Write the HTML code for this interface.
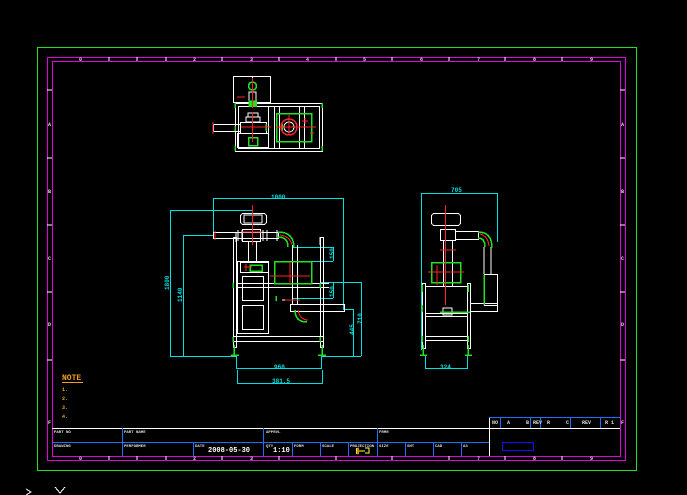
<!DOCTYPE html>
<html><head><style>
html,body{margin:0;padding:0;background:#000;}
svg{display:block}
text{font-family:"Liberation Mono",monospace;font-weight:bold}
</style></head><body>
<svg width="687" height="495" viewBox="0 0 687 495" xmlns="http://www.w3.org/2000/svg" shape-rendering="crispEdges">
<rect width="687" height="495" fill="#000"/>
<!-- borders -->
<rect x="37.5" y="47.5" width="599" height="423" fill="none" stroke="#22e022" stroke-width="1"/>
<rect x="47.5" y="57.5" width="578" height="403" fill="none" stroke="#e000e0" stroke-width="1"/>
<rect x="52.5" y="61.5" width="568" height="395" fill="none" stroke="#e000e0" stroke-width="1"/>
<g stroke="#fff" stroke-width="1">
<path d="M109 57v4M137 57v4M166 57v4M222 57v4M279 57v4M336 57v4M392 57v4M449 57v4M505 57v4M562 57v4"/>
<path d="M109 456v4M137 456v4M166 456v4M222 456v4M279 456v4M336 456v4M392 456v4M449 456v4M505 456v4M562 456v4"/>
<path d="M47 90h5M47 158h5M47 225h5M47 292h5M47 360h5M620 90h5M620 158h5M620 225h5M620 292h5M620 360h5"/>
</g>
<g fill="#ddd" font-size="5">
<text x="79" y="61">0</text><text x="193" y="61">2</text><text x="250" y="61">3</text><text x="306" y="61">4</text><text x="363" y="61">5</text><text x="420" y="61">6</text><text x="477" y="61">7</text><text x="533" y="61">8</text><text x="590" y="61">9</text>
<text x="79" y="460">0</text><text x="193" y="460">2</text><text x="250" y="460">3</text><text x="477" y="460">7</text><text x="533" y="460">8</text><text x="590" y="460">9</text>
<text x="48" y="126">A</text><text x="48" y="193">B</text><text x="48" y="260">C</text><text x="48" y="326">D</text><text x="48" y="424">F</text>
<text x="621" y="126">A</text><text x="621" y="193">B</text><text x="621" y="260">C</text><text x="621" y="326">D</text><text x="621" y="424">F</text>
</g>

<!-- title block -->
<g stroke-width="1" fill="none">
<path d="M52 428.5h437" stroke="#fff"/>
<path d="M489.5 417v39" stroke="#fff"/>
<path d="M489 417.5h131" stroke="#1e6fff"/>
<path d="M489 428.5h131" stroke="#fff"/>
<path d="M52 442.5h437" stroke="#1e6fff"/>
<path d="M122.5 428v28M263.5 428v28M193.5 442v14M292.5 442v14M320.5 442v14M348.5 442v14M377.5 428v28M405.5 442v14M433.5 442v14M461.5 442v14" stroke="#1e6fff"/>
<path d="M500.5 417v11M530.5 417v11M540.5 417v11M570.5 417v11M600.5 417v11" stroke="#1e6fff"/>
<rect x="502.5" y="442.5" width="31" height="8" stroke="#1010ff" stroke-width="1.3"/>
</g>
<g fill="#ddd" font-size="4">
<text x="54" y="433">PART NO</text><text x="124" y="433">PART NAME</text><text x="266" y="433">APPRVL</text><text x="379" y="433">FRMR</text>
<text x="54" y="447">DRAWING</text><text x="124" y="447">PERFORMER</text><text x="195" y="447">DATE</text><text x="266" y="447">QTY</text><text x="294" y="447">FORM</text><text x="322" y="447">SCALE</text><text x="350" y="447">PROJECTION</text><text x="379" y="447">SIZE</text><text x="407" y="447">SHT</text><text x="435" y="447">CAD</text><text x="463" y="447">A3</text>
</g>
<g fill="#ddd" font-size="5"><text x="492" y="424">NO</text><text x="507" y="424">A</text><text x="526" y="424">B</text><text x="533" y="424">REV</text><text x="547" y="424">R</text><text x="566" y="424">C</text><text x="582" y="424">REV</text><text x="605" y="424">R 1</text></g>
<text x="208" y="452" fill="#fff" font-size="7" font-weight="normal">2008-05-30</text>
<text x="273" y="452" fill="#fff" font-size="7" font-weight="normal">1:10</text>
<g><rect x="356" y="448" width="3" height="6" fill="#b0ff40"/><path d="M359 451h6M365 448h4v5h-4" stroke="#ff4" fill="none"/><path d="M358 447v8" stroke="#f00"/></g>

<!-- note -->
<text x="62" y="380" fill="#f0a020" font-size="8">NOTE</text>
<path d="M62 382.5h21" stroke="#f0a020"/>
<g fill="#f0a020" font-size="5"><text x="62" y="391">1.</text><text x="62" y="400">2.</text><text x="62" y="409">3.</text><text x="62" y="418">4.</text></g>

<!-- TOP VIEW -->
<g fill="none" stroke="#fff" stroke-width="1">
<rect x="233.5" y="76.5" width="37" height="26"/>
<rect x="235.5" y="103.5" width="87" height="48"/>
<rect x="238.5" y="106.5" width="81" height="42"/>
<path d="M268.5 106v42M274.5 106v42M279.5 106v42M299.5 106v42M304.5 106v42"/>
<rect x="213.5" y="124.5" width="27" height="7"/>
<rect x="240.5" y="122.5" width="26" height="11"/>
<path d="M246 117h14v5h-14zM248 113h10v4h-10z"/>
<rect x="237.5" y="133.5" width="31" height="14"/>
<path d="M252.5 76v16M249 92h7v14h-7z"/>
</g>
<g fill="none" stroke="#22e022" stroke-width="1.5">
<rect x="276.5" y="113.5" width="35" height="28"/>
<circle cx="252.5" cy="86" r="4"/>
<rect x="249" y="101" width="7" height="5" fill="#22e022"/>
<rect x="248.5" y="137.5" width="9" height="8"/>
<path d="M235 103v5M235 126v5M235 146v5M322 103v5M322 146v5M266 124v7M282 124v7"/>
</g>
<g stroke="#f22" fill="none" stroke-width="1">
<circle cx="289" cy="127" r="8" stroke-width="1.5"/><circle cx="289" cy="127" r="5" stroke="#fff"/>
<path d="M276 127h40M289 115v19M252.5 78v30M252.5 112v30M241 127h30M213 122v12M237 97h8M305 118v6M302 121h6M310 133h4"/>
</g>

<!-- FRONT VIEW dims -->
<g fill="none" stroke="#00e0e0" stroke-width="1">
<path d="M213 198.5h130M213.5 198v35M343.5 198v111"/>
<path d="M170.5 210v146M170 210.5h83M170 356.5h66M183.5 235v121M183 235.5h30"/>
<path d="M361.5 282v74M320 282.5h41M322 356.5h39M353.5 309v47M343 309.5h10"/>
<path d="M333.5 247v14M293 247.5h40M293 261.5h40M333.5 282v16M293 298.5h40"/>
<path d="M236.5 356v12M321.5 356v12M236 368.5h86M237.5 370v14M322.5 370v14M237 383.5h86"/>
<path d="M421.5 193v157M497.5 193v49M421 193.5h77M425.5 355v14M467.5 355v14M425 368.5h43"/>
</g>
<g fill="#00e0e0" font-size="6">
<text x="271" y="199">1000</text><text x="272" y="383">381.5</text><text x="274" y="369">960</text><text x="451" y="192">705</text><text x="440" y="369">324</text>
<text transform="translate(169 290) rotate(-90)">1800</text><text transform="translate(182 302) rotate(-90)">1140</text>
<text transform="translate(334 259) rotate(-90)">150</text><text transform="translate(334 297) rotate(-90)">150</text>
<text transform="translate(362 324) rotate(-90)">710</text><text transform="translate(354 335) rotate(-90)">445</text>
</g>

<!-- FRONT VIEW machine -->
<g fill="none" stroke="#fff" stroke-width="1">
<rect x="233.5" y="237.5" width="3" height="110"/><rect x="320.5" y="237.5" width="3" height="110"/>
<path d="M236 232v10M320 237v8"/>
<rect x="233.5" y="336.5" width="90" height="5"/>
<path d="M236 283.5h93M236 287.5h93"/>
<rect x="237.5" y="261.5" width="31" height="72"/>
<rect x="240.5" y="262.5" width="28" height="10"/>
<rect x="242.5" y="276.5" width="21" height="24"/><rect x="242.5" y="305.5" width="21" height="24"/>
<rect x="213.5" y="232.5" width="65" height="6"/>
<path d="M238 230v11M242 230v11M263 230v11M267 230v11M277 230v11"/>
<rect x="240.5" y="213.5" width="26" height="11" rx="3"/>
<path d="M244 215h18v8h-18z"/>
<rect x="242.5" y="229.5" width="18" height="12"/>
<path d="M248.5 241v21M256.5 241v21"/>
<path d="M292.5 245v60M297.5 245v60"/>
<rect x="290.5" y="304.5" width="54" height="7"/>
<path d="M282 300h18"/>
</g>
<g fill="none" stroke="#22e022" stroke-width="1.5">
<path d="M278 232q16 0 16 16M278 237q10 0 10 10"/>
<rect x="274.5" y="261.5" width="37" height="22"/>
<path d="M233 337v5M320 337v5M233 283v5M320 283v5M276 296v5"/>
<path d="M234 345v10M322 345v10M231 355h8M318 355h8"/>
<path d="M295 310q0 12 12 12"/>
<rect x="250" y="265" width="12" height="6"/>
</g>
<g stroke="#f22" fill="none" stroke-width="1">
<path d="M252.5 205v40M242 232h20M270 276h40M290 262v22M285 300h15M298 310q2 10 10 10M280 235q10 1 12 10M226 340h0M215 231v9"/>
<path d="M244 267h8M246 264v7"/>
</g>

<!-- SIDE VIEW -->
<g fill="none" stroke="#fff" stroke-width="1">
<rect x="431.5" y="213.5" width="29" height="12" rx="3"/>
<rect x="440.5" y="229.5" width="15" height="11"/>
<path d="M443.5 241v45M452.5 241v45"/>
<rect x="455.5" y="231.5" width="23" height="8"/>
<path d="M484 247v27M491 247v27"/>
<rect x="484.5" y="274.5" width="13" height="31"/>
<rect x="470.5" y="303.5" width="27" height="8"/>
<rect x="422.5" y="283.5" width="3" height="65"/><rect x="467.5" y="283.5" width="3" height="65"/>
<path d="M425 286.5h43M425 313.5h43M425 316.5h43M425 336.5h43M425 340.5h43"/>
<path d="M443 308h9v7h-9z"/>
</g>
<g fill="none" stroke="#22e022" stroke-width="1.5">
<path d="M478 232q14 0 14 16M478 238q7 0 7 9"/>
<rect x="431.5" y="262.5" width="29" height="20"/>
<path d="M422 285v7M468 285v7M422 305v7M422 336v6M468 336v6M440 312h30"/>
<path d="M423 345v10M468 345v10M420 355h7M465 355h7"/>
<path d="M484 275v30"/>
</g>
<g stroke="#f22" fill="none" stroke-width="1">
<path d="M445.5 205v100M428 272h36M480 234q8 2 9 12M440 250h16M437 265v20"/>
</g>

<!-- bottom-left glyphs -->
<path d="M26 489l5 3-5 3M55 487l5 6 5-6" stroke="#fff" fill="none"/>
</svg>
</body></html>
